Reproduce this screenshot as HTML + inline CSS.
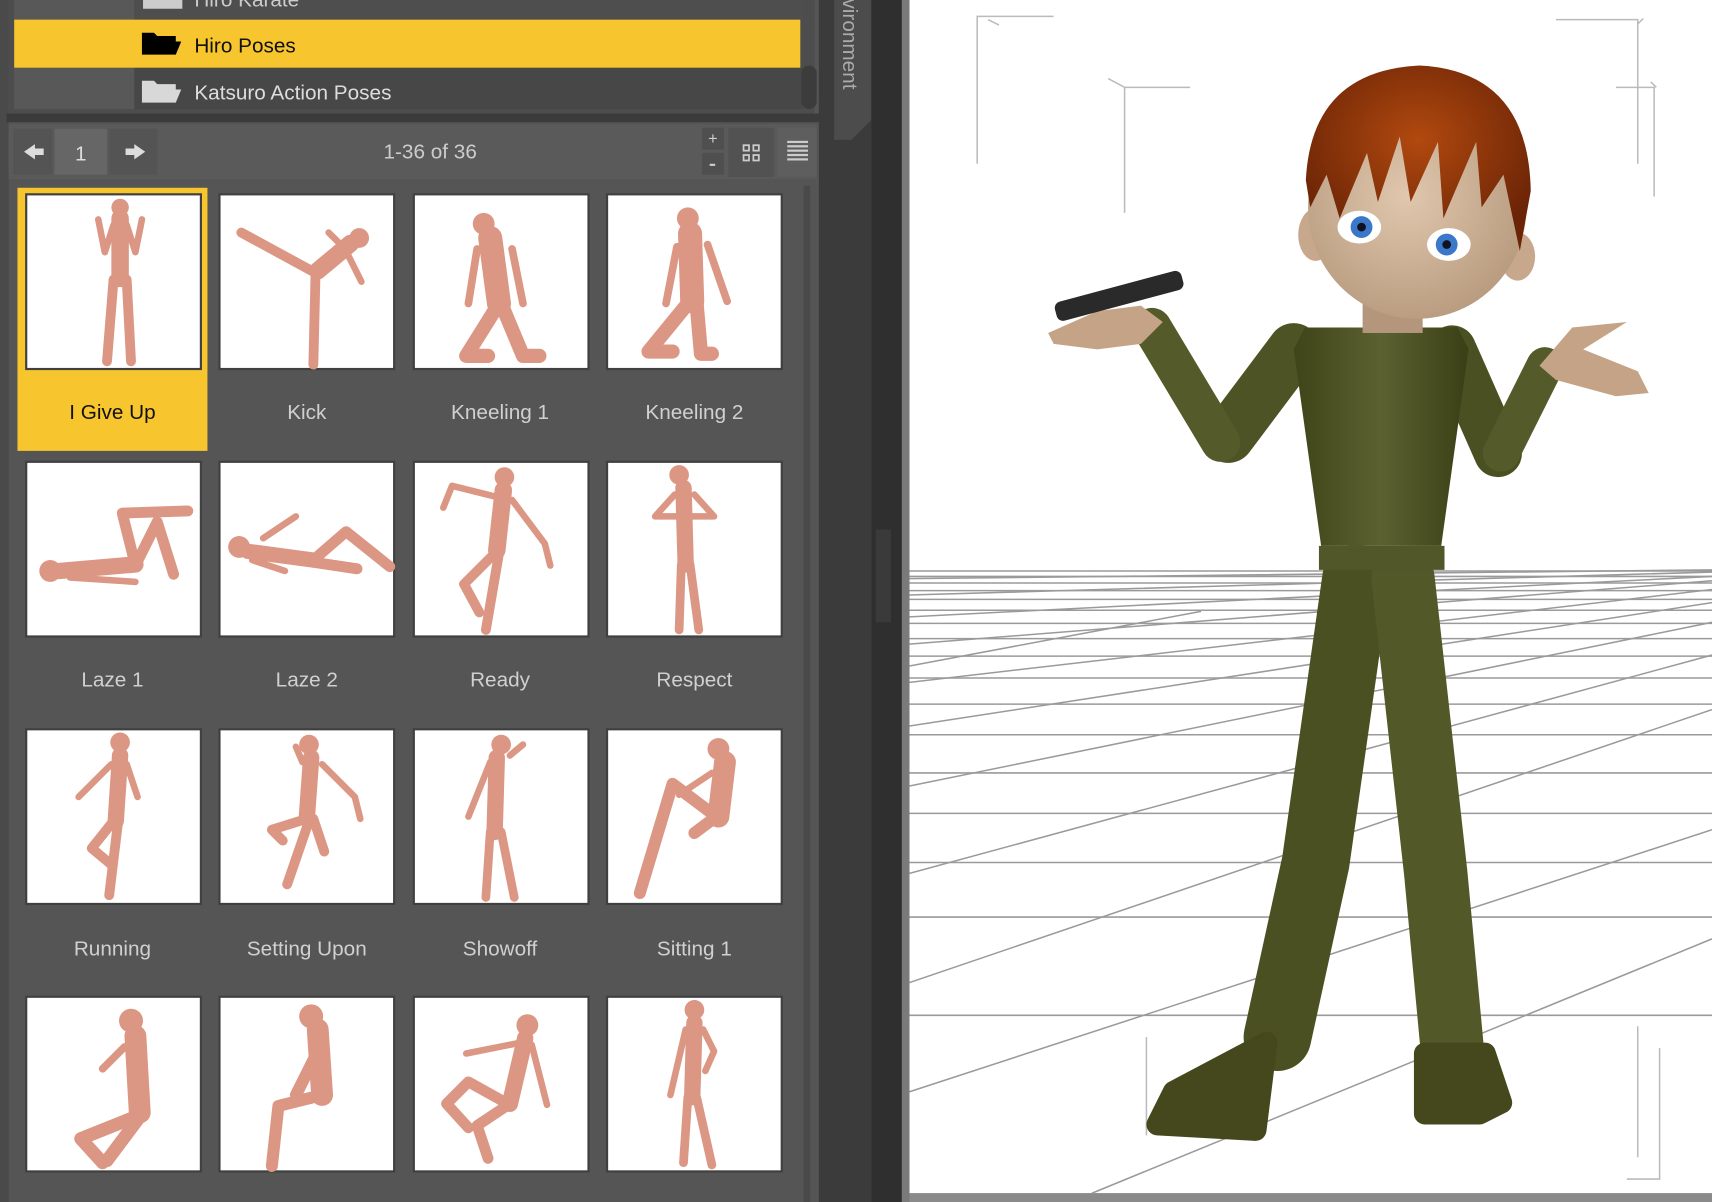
<!DOCTYPE html>
<html><head><meta charset="utf-8"><style>html,body{margin:0;padding:0;background:#555;overflow:hidden}svg{display:block}text{font-family:"Liberation Sans",Arial,sans-serif}</style></head><body>
<svg width="1712" height="1202" viewBox="0 0 1568 1101" preserveAspectRatio="none" xmlns="http://www.w3.org/2000/svg">
<defs>
<linearGradient id="olive" x1="0" x2="1"><stop offset="0" stop-color="#3f4419"/><stop offset=".5" stop-color="#5b6130"/><stop offset="1" stop-color="#3a3f16"/></linearGradient>
<radialGradient id="hair" cx=".5" cy=".4" r=".6"><stop offset="0" stop-color="#b1490f"/><stop offset="1" stop-color="#6b2406"/></radialGradient>
<radialGradient id="skin" cx=".45" cy=".45" r=".6"><stop offset="0" stop-color="#e0c7ad"/><stop offset="1" stop-color="#b79a7e"/></radialGradient>
<g id="frame"><rect x="0" y="0" width="160" height="160" fill="#fff" stroke="#404040" stroke-width="2"/></g>
</defs>
<rect x="0" y="0" width="750" height="1101" fill="#555"/>
<rect x="0" y="0" width="8" height="1101" fill="#4a4a4a"/>
<rect x="8" y="0" width="738" height="104" fill="#4d4d4d"/>
<rect x="13" y="0" width="110" height="100" fill="#585858"/>
<rect x="123" y="62" width="612" height="38" fill="#474747"/>
<rect x="123" y="0" width="612" height="18" fill="#4e4e4e"/>
<text x="178" y="6" font-size="19" fill="#ccc">Hiro Karate</text>
<path d="M131 0h36v8h-36z" fill="#ccc"/>
<rect x="13" y="18" width="720" height="44" fill="#f7c52d"/>
<path d="M130 50V30h11l3 3h17v5h5l-5 12z" fill="#000"/>
<text x="178" y="48" font-size="19" fill="#111">Hiro Poses</text>
<path d="M130 94V74h11l3 3h17v5h5l-5 12z" fill="#d8d8d8"/>
<text x="178" y="91" font-size="19" fill="#ddd">Katsuro Action Poses</text>
<rect x="734" y="60" width="14" height="40" rx="7" fill="#3c3c3c"/>
<rect x="6" y="104" width="744" height="8" fill="#3b3b3b"/>
<rect x="8" y="114" width="740" height="50" fill="#5a5a5a"/>
<rect x="12" y="118" width="36" height="42" fill="#545454"/>
<path d="M22 139l10-7v4h8v6h-8v4z" fill="#ddd"/>
<rect x="50" y="118" width="48" height="42" fill="#666"/>
<text x="74" y="147" font-size="19" fill="#ddd" text-anchor="middle">1</text>
<rect x="100" y="118" width="44" height="42" fill="#545454"/>
<path d="M133 139l-10-7v4h-8v6h8v4z" fill="#ddd"/>
<text x="394" y="145" font-size="19" fill="#ccc" text-anchor="middle">1-36 of 36</text>
<rect x="643" y="117" width="20" height="20" fill="#4f4f4f"/><text x="653" y="132" font-size="15" fill="#ccc" text-anchor="middle">+</text>
<rect x="643" y="140" width="20" height="20" fill="#4f4f4f"/><rect x="650" y="150" width="5" height="2" fill="#ccc"/>
<rect x="667" y="117" width="42" height="45" fill="#525252"/>
<g fill="none" stroke="#ccc" stroke-width="1.6"><rect x="681" y="133" width="5" height="5"/><rect x="690" y="133" width="5" height="5"/><rect x="681" y="142" width="5" height="5"/><rect x="690" y="142" width="5" height="5"/></g>
<rect x="712" y="117" width="36" height="45" fill="#5e5e5e"/>
<g fill="#ccc"><rect x="721" y="129" width="19" height="2"/><rect x="721" y="133" width="19" height="2"/><rect x="721" y="137" width="19" height="2"/><rect x="721" y="141" width="19" height="2"/><rect x="721" y="145" width="19" height="2"/></g>
<rect x="10" y="166" width="736" height="935" fill="#555"/>
<rect x="736" y="170" width="6" height="931" fill="#4a4a4a"/>
<rect x="16" y="172" width="174" height="241" fill="#f7c52d"/>
<g transform="translate(24,178)"><use href="#frame"/></g>
<g transform="translate(201,178)"><use href="#frame"/></g>
<g transform="translate(379,178)"><use href="#frame"/></g>
<g transform="translate(556,178)"><use href="#frame"/></g>
<g transform="translate(24,423)"><use href="#frame"/></g>
<g transform="translate(201,423)"><use href="#frame"/></g>
<g transform="translate(379,423)"><use href="#frame"/></g>
<g transform="translate(556,423)"><use href="#frame"/></g>
<g transform="translate(24,668)"><use href="#frame"/></g>
<g transform="translate(201,668)"><use href="#frame"/></g>
<g transform="translate(379,668)"><use href="#frame"/></g>
<g transform="translate(556,668)"><use href="#frame"/></g>
<g transform="translate(24,913)"><use href="#frame"/></g>
<g transform="translate(201,913)"><use href="#frame"/></g>
<g transform="translate(379,913)"><use href="#frame"/></g>
<g transform="translate(556,913)"><use href="#frame"/></g>
<g fill="none" stroke="#dc9684" stroke-linecap="round" stroke-linejoin="round">
 <g transform="translate(24,178)"><circle cx="86" cy="12" r="8" fill="#dc9684" stroke="none"/><path d="M86 22v55" stroke-width="16"/><path d="M80 78l-6 75M92 78l4 75" stroke-width="9"/><path d="M80 28l-8 25-6-30M92 28l8 25 6-30" stroke-width="6"/></g>
 <g transform="translate(201,178)"><circle cx="128" cy="40" r="9" fill="#dc9684" stroke="none"/><path d="M120 45l-30 25" stroke-width="16"/><path d="M88 72L20 35M88 72l-2 84" stroke-width="9"/><path d="M115 50l15 30M110 45l-10-10" stroke-width="6"/></g>
 <g transform="translate(379,178)"><circle cx="64" cy="27" r="10" fill="#dc9684" stroke="none"/><path d="M70 40l8 60" stroke-width="22"/><path d="M78 100l-30 48h20M80 100l20 48h15" stroke-width="13"/><path d="M58 50l-8 50M90 50l10 50" stroke-width="7"/></g>
 <g transform="translate(556,178)"><circle cx="74" cy="22" r="10" fill="#dc9684" stroke="none"/><path d="M76 36l2 62" stroke-width="22"/><path d="M74 100l-36 44h22M82 100l4 46h10" stroke-width="13"/><path d="M64 48l-10 52M92 46l18 52" stroke-width="7"/></g>
 <g transform="translate(24,423)"><circle cx="22" cy="100" r="10" fill="#dc9684" stroke="none"/><path d="M30 100l70-6" stroke-width="15"/><path d="M100 95l-12-48 60-2M100 95l20-40 15 48" stroke-width="10"/><path d="M40 106l60 4" stroke-width="6"/></g>
 <g transform="translate(201,423)"><circle cx="18" cy="78" r="10" fill="#dc9684" stroke="none"/><path d="M26 82l60 8" stroke-width="14"/><path d="M86 90l30-26 40 32M86 92l40 6" stroke-width="10"/><path d="M30 90l30 10M40 70l30-20" stroke-width="6"/></g>
 <g transform="translate(379,423)"><circle cx="83" cy="14" r="9" fill="#dc9684" stroke="none"/><path d="M82 26l-6 55" stroke-width="16"/><path d="M76 82l-30 30 14 26M78 84l-12 70" stroke-width="9"/><path d="M75 32l-40-10-8 20M90 35l30 40 5 20" stroke-width="6"/></g>
 <g transform="translate(556,423)"><circle cx="66" cy="12" r="9" fill="#dc9684" stroke="none"/><path d="M70 24l2 70" stroke-width="15"/><path d="M68 94l-2 60M76 94l8 60" stroke-width="8"/><path d="M62 30l-18 20h22M80 30l18 20h-20" stroke-width="6"/></g>
 <g transform="translate(24,668)"><circle cx="86" cy="12" r="9" fill="#dc9684" stroke="none"/><path d="M86 24l-4 60" stroke-width="15"/><path d="M80 84l-20 25 18 15M84 86l-8 66" stroke-width="9"/><path d="M78 32l-30 30M92 32l10 30" stroke-width="6"/></g>
 <g transform="translate(201,668)"><circle cx="82" cy="14" r="9" fill="#dc9684" stroke="none"/><path d="M84 26l-4 55" stroke-width="15"/><path d="M80 82l-32 10 10 10M82 84l-20 58M86 82l10 30" stroke-width="9"/><path d="M76 30l-6-14M94 32l30 30 5 20" stroke-width="6"/></g>
 <g transform="translate(379,668)"><circle cx="80" cy="14" r="9" fill="#dc9684" stroke="none"/><path d="M76 26l-2 68" stroke-width="15"/><path d="M70 94l-4 60M80 94l12 60" stroke-width="8"/><path d="M70 30l-20 50M88 24l12-10" stroke-width="6"/></g>
 <g transform="translate(556,668)"><circle cx="102" cy="18" r="10" fill="#dc9684" stroke="none"/><path d="M108 30l-6 50" stroke-width="20"/><path d="M100 80l-40-30 -30 100M100 80l-20 15" stroke-width="11"/><path d="M96 40l-30 20" stroke-width="6"/></g>
 <g transform="translate(24,913)"><circle cx="96" cy="22" r="11" fill="#dc9684" stroke="none"/><path d="M100 36l4 70" stroke-width="20"/><path d="M100 110l-50 20 20 22M104 110l-30 40" stroke-width="12"/><path d="M90 46l-20 20" stroke-width="7"/></g>
 <g transform="translate(201,913)"><circle cx="84" cy="18" r="11" fill="#dc9684" stroke="none"/><path d="M90 30l4 60" stroke-width="20"/><path d="M94 90l-40 10-6 55M90 50l-20 40" stroke-width="11"/></g>
 <g transform="translate(379,913)"><circle cx="104" cy="26" r="10" fill="#dc9684" stroke="none"/><path d="M102 38l-14 60" stroke-width="15"/><path d="M86 98l-36-20 -20 20 20 22M88 98l-30 20 10 30" stroke-width="10"/><path d="M98 42l-50 10M108 44l14 55" stroke-width="6"/></g>
 <g transform="translate(556,913)"><circle cx="80" cy="12" r="9" fill="#dc9684" stroke="none"/><path d="M80 24l-2 68" stroke-width="15"/><path d="M74 92l-4 60M82 92l14 62" stroke-width="8"/><path d="M72 30l-14 60M88 30l10 20-8 18" stroke-width="6"/></g>
</g>
<g font-size="19" fill="#d0d0d0" text-anchor="middle">
<text x="103" y="384" fill="#111">I Give Up</text><text x="281" y="384">Kick</text><text x="458" y="384">Kneeling 1</text><text x="636" y="384">Kneeling 2</text>
<text x="103" y="629">Laze 1</text><text x="281" y="629">Laze 2</text><text x="458" y="629">Ready</text><text x="636" y="629">Respect</text>
<text x="103" y="875">Running</text><text x="281" y="875">Setting Upon</text><text x="458" y="875">Showoff</text><text x="636" y="875">Sitting 1</text>
</g>
<rect x="750" y="0" width="48" height="1101" fill="#3b3b3b"/>
<path d="M764 0h34v110l-18 18h-16z" fill="#4c4c4c"/>
<text transform="translate(772,0) rotate(90)" font-size="19" fill="#aaa" x="-12">nvironment</text>
<rect x="798" y="0" width="28" height="1101" fill="#2f2f2f"/>
<rect x="802" y="485" width="14" height="85" fill="#3a3a3a"/>
<rect x="826" y="0" width="8" height="1101" fill="#7a7a7a"/>
<rect x="833" y="0" width="735" height="1093" fill="#fff"/>
<rect x="833" y="1093" width="735" height="8" fill="#8a8a8a"/>
<g stroke="#9a9a9a" stroke-width="1.4" fill="none">
<path d="M833 523H1568M833 528H1568M833 534H1568M833 541H1568M833 549H1568M833 559H1568M833 571H1568M833 585H1568M833 601H1568M833 621H1568M833 645H1568M833 673H1568M833 708H1568M833 745H1568M833 790H1568M833 840H1568M833 930H1568"/>
<path d="M833 530L1568 522M833 545L1568 524M833 565L1568 528M833 590L1568 532M833 625L1568 540M833 665L1568 552M833 720L1568 570M833 800L1568 600M833 900L1568 650M833 1000L1568 760M1000 1093L1568 860M833 610L1100 560"/>
</g>
<g stroke="#bbb" stroke-width="1.4" fill="none">
<path d="M895 150V15h70M905 18l10 5M1030 195V80h60M1015 72l15 8M1500 150V18h-75M1500 22l5-5M1515 180V80h-35M1512 75l5 5M1050 950V1040M1500 940V1060M1520 960V1080h-30"/>
</g>
<!-- character -->
<g stroke-linecap="round" stroke-linejoin="round" fill="none">
<!-- legs -->
<path d="M1242 530L1205 790L1170 950" stroke="#4b5022" stroke-width="62"/>
<path d="M1285 530L1315 800L1330 960" stroke="#535829" stroke-width="58"/>
<path d="M1160 955L1075 1000L1060 1030L1150 1035Z" fill="#44481c" stroke="#44481c" stroke-width="20"/>
<path d="M1305 965H1360L1375 1010L1355 1020H1305Z" fill="#44481c" stroke="#44481c" stroke-width="20"/>
<!-- arms -->
<path d="M1185 320L1125 400" stroke="#4e5325" stroke-width="48"/>
<path d="M1118 405L1055 300" stroke="#555a2a" stroke-width="36"/>
<path d="M1330 320L1372 415" stroke="#4b5022" stroke-width="44"/>
<path d="M1375 415L1415 335" stroke="#555a2a" stroke-width="34"/>
</g>
<path d="M1195 300h140l10 20-25 180h-110l-25-180z" fill="url(#olive)"/>
<rect x="1208" y="500" width="115" height="22" fill="#52572a"/>
<path d="M960 305l45-20 40-5 20 15-20 20-40 5-40-5z" fill="#c4a386"/>
<path d="M1410 335l30-35 50-5-40 25 50 20 10 20-30 3-55-15z" fill="#c4a386"/>
<rect x="965" y="262" width="120" height="18" rx="6" transform="rotate(-15 1025 271)" fill="#2a2a2a"/>
<rect x="1248" y="270" width="55" height="35" fill="#b3967b"/>
<ellipse cx="1205" cy="215" rx="16" ry="24" fill="#c7a88d"/>
<ellipse cx="1390" cy="235" rx="16" ry="22" fill="#c7a88d"/>
<ellipse cx="1298" cy="190" rx="100" ry="102" fill="url(#skin)"/>
<ellipse cx="1245" cy="208" rx="20" ry="15" fill="#fff"/><circle cx="1247" cy="208" r="10" fill="#3b78c9"/><circle cx="1247" cy="208" r="4" fill="#112"/>
<ellipse cx="1327" cy="224" rx="20" ry="15" fill="#fff"/><circle cx="1325" cy="224" r="10" fill="#3b78c9"/><circle cx="1325" cy="224" r="4" fill="#112"/>
<path d="M1196 165q5-100 104-105q100 5 102 115l-10 55-15-70-20 30-5-60-30 70-5-70-25 55-10-60-20 60-10-45-25 60-12-40-15 30z" fill="url(#hair)"/>
</svg>
</body></html>
